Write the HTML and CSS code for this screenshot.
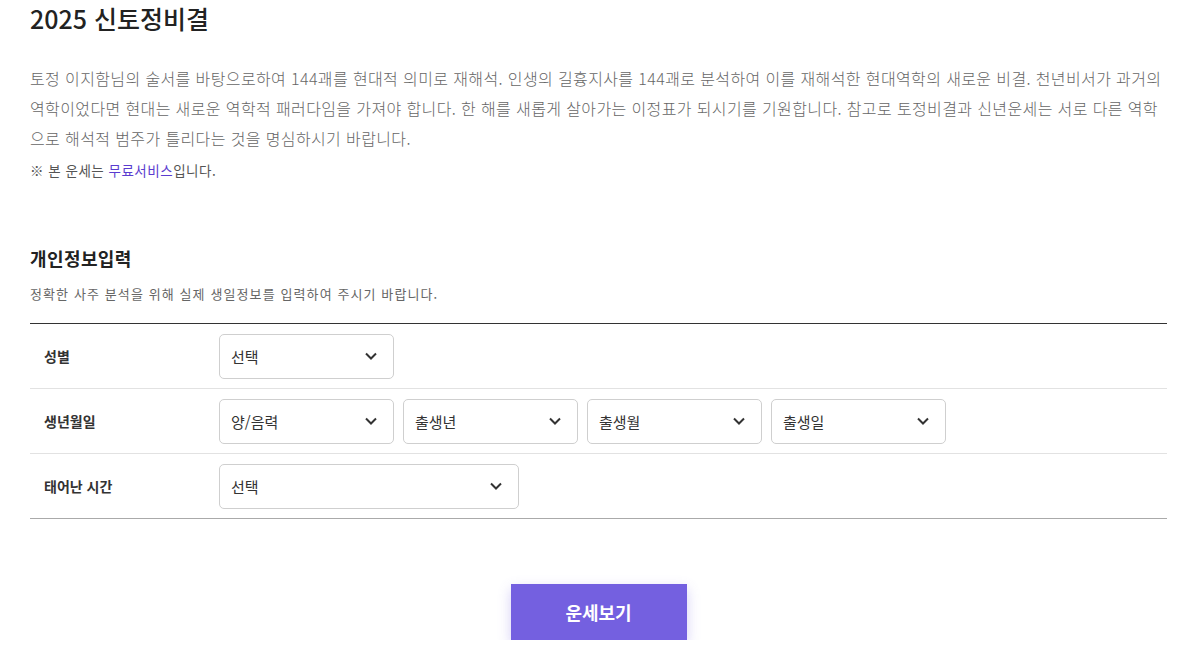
FILE: index.html
```html
<!DOCTYPE html>
<html lang="ko">
<head>
<meta charset="utf-8">
<title>2025 신토정비결</title>
<link rel="stylesheet" href="styles.css">
</head>
<body>
<div class="page">
  <h1 class="title">2025 신토정비결</h1>
  <p class="desc">토정 이지함님의 술서를 바탕으로하여 144괘를 현대적 의미로 재해석. 인생의 길흉지사를 144괘로 분석하여 이를 재해석한 현대역학의 새로운 비결. 천년비서가 과거의 역학이었다면 현대는 새로운 역학적 패러다임을 가져야 합니다. 한 해를 새롭게 살아가는 이정표가 되시기를 기원합니다. 참고로 토정비결과 신년운세는 서로 다른 역학으로 해석적 범주가 틀리다는 것을 명심하시기 바랍니다.</p>
  <p class="note">※ 본 운세는 <span class="free">무료서비스</span>입니다.</p>

  <h2 class="sec-title">개인정보입력</h2>
  <p class="sec-sub">정확한 사주 분석을 위해 실제 생일정보를 입력하여 주시기 바랍니다.</p>

  <div class="form">
    <div class="row">
      <div class="label">성별</div>
      <div class="fields">
        <div class="select">선택<svg class="chev" viewBox="0 0 12 8"><path d="M1 1.5 L6 6.5 L11 1.5"/></svg></div>
      </div>
    </div>
    <div class="row">
      <div class="label">생년월일</div>
      <div class="fields">
        <div class="select">양/음력<svg class="chev" viewBox="0 0 12 8"><path d="M1 1.5 L6 6.5 L11 1.5"/></svg></div>
        <div class="select">출생년<svg class="chev" viewBox="0 0 12 8"><path d="M1 1.5 L6 6.5 L11 1.5"/></svg></div>
        <div class="select">출생월<svg class="chev" viewBox="0 0 12 8"><path d="M1 1.5 L6 6.5 L11 1.5"/></svg></div>
        <div class="select">출생일<svg class="chev" viewBox="0 0 12 8"><path d="M1 1.5 L6 6.5 L11 1.5"/></svg></div>
      </div>
    </div>
    <div class="row last">
      <div class="label">태어난 시간</div>
      <div class="fields">
        <div class="select wide">선택<svg class="chev" viewBox="0 0 12 8"><path d="M1 1.5 L6 6.5 L11 1.5"/></svg></div>
      </div>
    </div>
  </div>

  <div class="actions">
    <button class="btn" type="button">운세보기</button>
  </div>
</div>
</body>
</html>
```

FILE: styles.css
```css
* { box-sizing: border-box; }
html, body { margin: 0; padding: 0; background: #fff; }
body {
  font-family: "Noto Sans CJK KR", "Noto Sans", sans-serif;
  color: #222;
}
.page {
  width: 1198px;
  padding: 0 31px 0 30px;
}
.title {
  margin: 0;
  font-size: 25px;
  line-height: 36px;
  font-weight: 500;
  color: #222;
}
.desc {
  margin: 27px 0 0;
  font-size: 16px;
  line-height: 30px;
  font-weight: 300;
  color: #666;
  letter-spacing: 0.38px;
}
.note {
  margin: 7px 0 0;
  font-size: 13.5px;
  line-height: 20px;
  color: #555;
  letter-spacing: 0.5px;
}
.free { color: #5b3ccf; }
.sec-title {
  margin: 65px 0 0;
  font-size: 18px;
  line-height: 26px;
  font-weight: 700;
  color: #222;
  letter-spacing: 0.4px;
}
.sec-sub {
  margin: 13px 0 0;
  font-size: 13px;
  line-height: 20px;
  color: #666;
  letter-spacing: 1.1px;
}
.form {
  margin-top: 19px;
  border-top: 1px solid #333;
  border-bottom: 1px solid #aaa;
}
.row {
  display: flex;
  align-items: center;
  height: 65px;
  border-bottom: 1px solid #e2e2e2;
}
.row.last { border-bottom: 0; height: 64px; }
.label {
  width: 189px;
  padding-left: 14px;
  font-size: 14px;
  font-weight: 700;
  color: #333;
}
.fields {
  display: flex;
  gap: 9px;
}
.select {
  width: 175px;
  height: 45px;
  border: 1px solid #cfcfcf;
  border-radius: 5px;
  display: flex;
  align-items: center;
  justify-content: space-between;
  padding: 0 16px 0 11px;
  font-size: 15px;
  color: #333;
}
.select.wide { width: 300px; }
.chev {
  width: 12px;
  height: 8px;
  fill: none;
  stroke: #333;
  stroke-width: 2;
}
.actions {
  display: flex;
  justify-content: center;
  margin-top: 65px;
}
.btn {
  width: 176px;
  height: 56px;
  border: 0;
  background: #7460e0;
  color: #fff;
  font-family: inherit;
  font-size: 18px;
  font-weight: 700;
  box-shadow: 0 5px 12px rgba(116, 96, 224, 0.3);
  cursor: pointer;
}
```
